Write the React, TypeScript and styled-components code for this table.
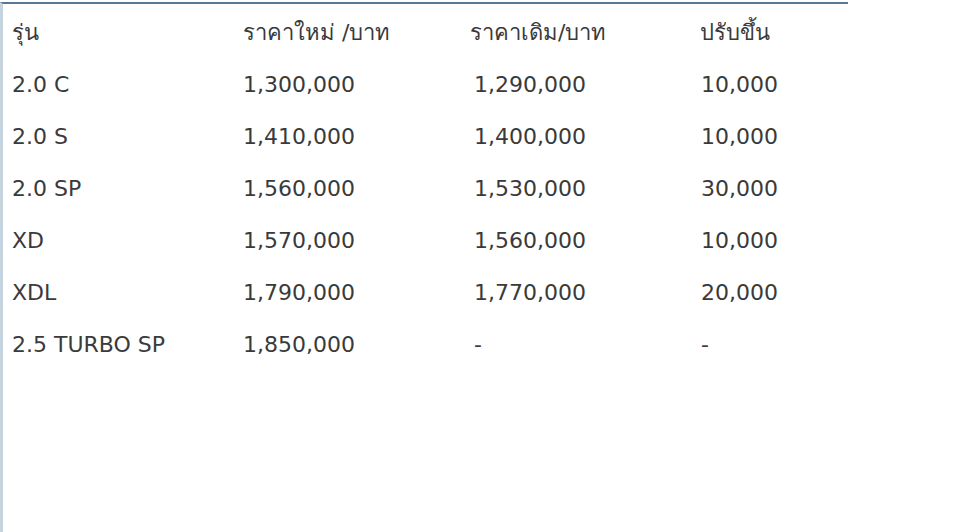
import React from 'react';
import styled, { createGlobalStyle } from 'styled-components';

const GlobalStyle = createGlobalStyle`
  html, body {
    margin: 0;
    padding: 0;
    background: #ffffff;
  }
`;

const Page = styled.div`
  width: 960px;
  height: 532px;
  background: #ffffff;
  padding-top: 2px;
  box-sizing: border-box;
`;

const Frame = styled.div`
  width: 848px;
  height: 530px;
  box-sizing: border-box;
  border-top: 2px solid #5b7892;
  border-left: 3px solid #c6d4df;
  padding: 7px 0 0 9px;
`;

const Table = styled.div`
  display: grid;
  grid-template-columns: 231px 227px 230px 160px;
  grid-auto-rows: 52px;
  font-family: 'DejaVu Sans', 'Noto Sans', sans-serif;
  font-size: 22px;
  color: #3a3a3a;
`;

const Cell = styled.div<{ $shift?: number }>`
  display: flex;
  align-items: center;
  height: 42px;
  padding-left: ${(p) => p.$shift ?? 0}px;
  white-space: nowrap;
`;

const rows = [
  ['2.0 C', '1,300,000', '1,290,000', '10,000'],
  ['2.0 S', '1,410,000', '1,400,000', '10,000'],
  ['2.0 SP', '1,560,000', '1,530,000', '30,000'],
  ['XD', '1,570,000', '1,560,000', '10,000'],
  ['XDL', '1,790,000', '1,770,000', '20,000'],
  ['2.5 TURBO SP', '1,850,000', '-', '-'],
];

const heads = ['รุ่น', 'ราคาใหม่ /บาท', 'ราคาเดิม/บาท', 'ปรับขึ้น'];

export default function App() {
  return (
    <>
      <GlobalStyle />
      <Page>
        <Frame>
          <Table>
            {heads.map((h) => (
              <Cell key={h}>{h}</Cell>
            ))}
            {rows.map((r) =>
              r.map((v, i) => (
                <Cell key={r[0] + i} $shift={i === 2 ? 4 : i === 3 ? 1 : 0}>
                  {v}
                </Cell>
              ))
            )}
          </Table>
        </Frame>
      </Page>
    </>
  );
}
